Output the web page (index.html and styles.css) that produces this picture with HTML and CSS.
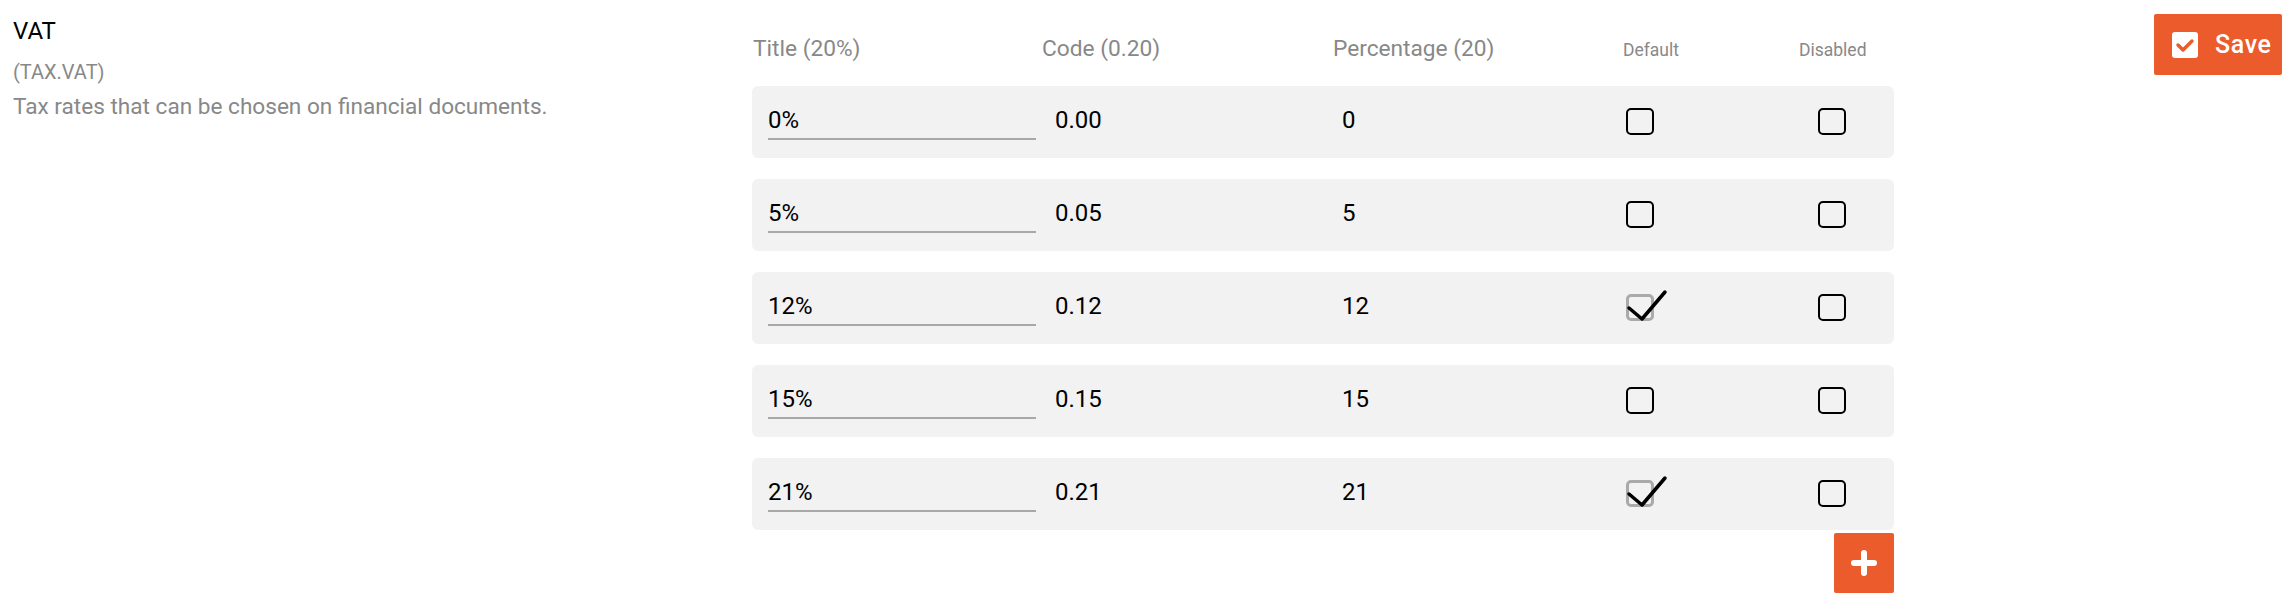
FILE: index.html
```html
<!DOCTYPE html>
<html>
<head>
    <title>Settings - VAT</title>
    <link rel="stylesheet" href="styles.css">
</head>
<body>
    <div class="page">
        <div class="setting-info">
            <div class="setting-name">VAT</div>
            <div class="setting-key">(TAX.VAT)</div>
            <div class="setting-desc">Tax rates that can be chosen on financial documents.</div>
        </div>

        <div class="rates">
            <div class="rates-head">
                <span>Title (20%)</span>
                <span>Code (0.20)</span>
                <span>Percentage (20)</span>
                <span class="small">Default</span>
                <span class="small">Disabled</span>
            </div>

            <div class="rate-list">
                <div class="rate-row">
                    <input type="text" class="rate-title" value="0%">
                    <span>0.00</span>
                    <span>0</span>
                    <span class="checkbox"></span>
                    <span class="checkbox"></span>
                </div>
                <div class="rate-row">
                    <input type="text" class="rate-title" value="5%">
                    <span>0.05</span>
                    <span>5</span>
                    <span class="checkbox"></span>
                    <span class="checkbox"></span>
                </div>
                <div class="rate-row">
                    <input type="text" class="rate-title" value="12%">
                    <span>0.12</span>
                    <span>12</span>
                    <span class="checkbox checked">
                        <svg width="44" height="34" viewBox="0 0 44 34"><polyline points="3,17 16,28 39,1" /></svg>
                    </span>
                    <span class="checkbox"></span>
                </div>
                <div class="rate-row">
                    <input type="text" class="rate-title" value="15%">
                    <span>0.15</span>
                    <span>15</span>
                    <span class="checkbox"></span>
                    <span class="checkbox"></span>
                </div>
                <div class="rate-row">
                    <input type="text" class="rate-title" value="21%">
                    <span>0.21</span>
                    <span>21</span>
                    <span class="checkbox checked">
                        <svg width="44" height="34" viewBox="0 0 44 34"><polyline points="3,17 16,28 39,1" /></svg>
                    </span>
                    <span class="checkbox"></span>
                </div>
            </div>

            <div class="rates-foot">
                <button class="add-btn" title="Add rate">
                    <svg width="26" height="26" viewBox="0 0 26 26"><path d="M13 3v20M3 13h20" /></svg>
                </button>
            </div>
        </div>

        <button class="save-btn">
            <span class="save-icon">
                <svg width="26" height="26" viewBox="0 0 26 26"><polyline points="6,13 11,18 20,9" /></svg>
            </span>
            Save
        </button>
    </div>
</body>
</html>
```

FILE: styles.css
```css
body {
    margin: 0;
    font-family: Roboto, "Liberation Sans", sans-serif;
    color: #000;
    background: #fff;
}
.page {
    display: flex;
    align-items: flex-start;
    padding: 0 8px 0 13px;
}

/* left description */
.setting-info {
    width: 739px;
    flex-shrink: 0;
    padding-top: 16px;
}
.setting-name {
    font-size: 24px;
    line-height: 30px;
}
.setting-key {
    margin-top: 13px;
    font-size: 20px;
    line-height: 26px;
    color: #888;
}
.setting-desc {
    margin-top: 8px;
    font-size: 22.6px;
    line-height: 28px;
    color: #888;
}

/* rates table */
.rates {
    width: 1142px;
    flex-shrink: 0;
    padding-top: 34px;
}
.rates-head {
    display: grid;
    grid-template-columns: 289px 291px 290px 176px auto;
    align-items: baseline;
    height: 30px;
    padding-left: 1px;
    margin-bottom: 22px;
    font-size: 22.7px;
    line-height: 30px;
    color: #888;
}
.rates-head .small {
    font-size: 17.5px;
}
.rate-list {
    display: flex;
    flex-direction: column;
    gap: 21px;
}
.rate-row {
    display: grid;
    grid-template-columns: 287px 287px 284px 192px 28px;
    align-items: start;
    height: 72px;
    box-sizing: border-box;
    padding: 20px 0 0 16px;
    background: #f2f2f2;
    border-radius: 6px;
    font-size: 24px;
    line-height: 28px;
}
.rate-title {
    width: 268px;
    height: 28px;
    padding: 0 0 4px 0;
    margin: 0;
    border: none;
    border-bottom: 2px solid #a8a8a8;
    background: transparent;
    font: inherit;
    line-height: 28px;
    color: #000;
    outline: none;
    box-sizing: content-box;
}
.checkbox {
    position: relative;
    display: block;
    width: 28px;
    height: 27px;
    margin-top: 2px;
    box-sizing: border-box;
    border: 2px solid #000;
    border-radius: 5px;
}
.checkbox.checked {
    border-color: #aaa;
    border-width: 3px;
}
.checkbox svg {
    position: absolute;
    left: -3px;
    top: -6px;
    overflow: visible;
}
.checkbox polyline {
    fill: none;
    stroke: #000;
    stroke-width: 3.5;
    stroke-linecap: round;
    stroke-linejoin: round;
}

.rates-foot {
    display: flex;
    justify-content: flex-end;
    margin-top: 3px;
}
.add-btn {
    width: 60px;
    height: 60px;
    display: flex;
    align-items: center;
    justify-content: center;
    padding: 0;
    border: none;
    border-radius: 2px;
    background: #eb5b2b;
    cursor: pointer;
}
.add-btn path {
    stroke: #fff;
    stroke-width: 6;
    stroke-linecap: round;
}

/* save button */
.save-btn {
    margin: 14px 0 0 auto;
    height: 61px;
    width: 128px;
    display: flex;
    align-items: center;
    gap: 17px;
    padding: 0 0 0 18px;
    border: none;
    border-radius: 2px;
    background: #eb5b2b;
    color: #fff;
    font-family: Roboto, "Liberation Sans", sans-serif;
    font-size: 25px;
    font-weight: 500;
    letter-spacing: 0.6px;
    cursor: pointer;
}
.save-icon {
    display: block;
    width: 26px;
    height: 26px;
    background: #fff;
    border-radius: 3px;
}
.save-icon polyline {
    fill: none;
    stroke: #eb5b2b;
    stroke-width: 3.5;
    stroke-linecap: round;
    stroke-linejoin: round;
}
```
